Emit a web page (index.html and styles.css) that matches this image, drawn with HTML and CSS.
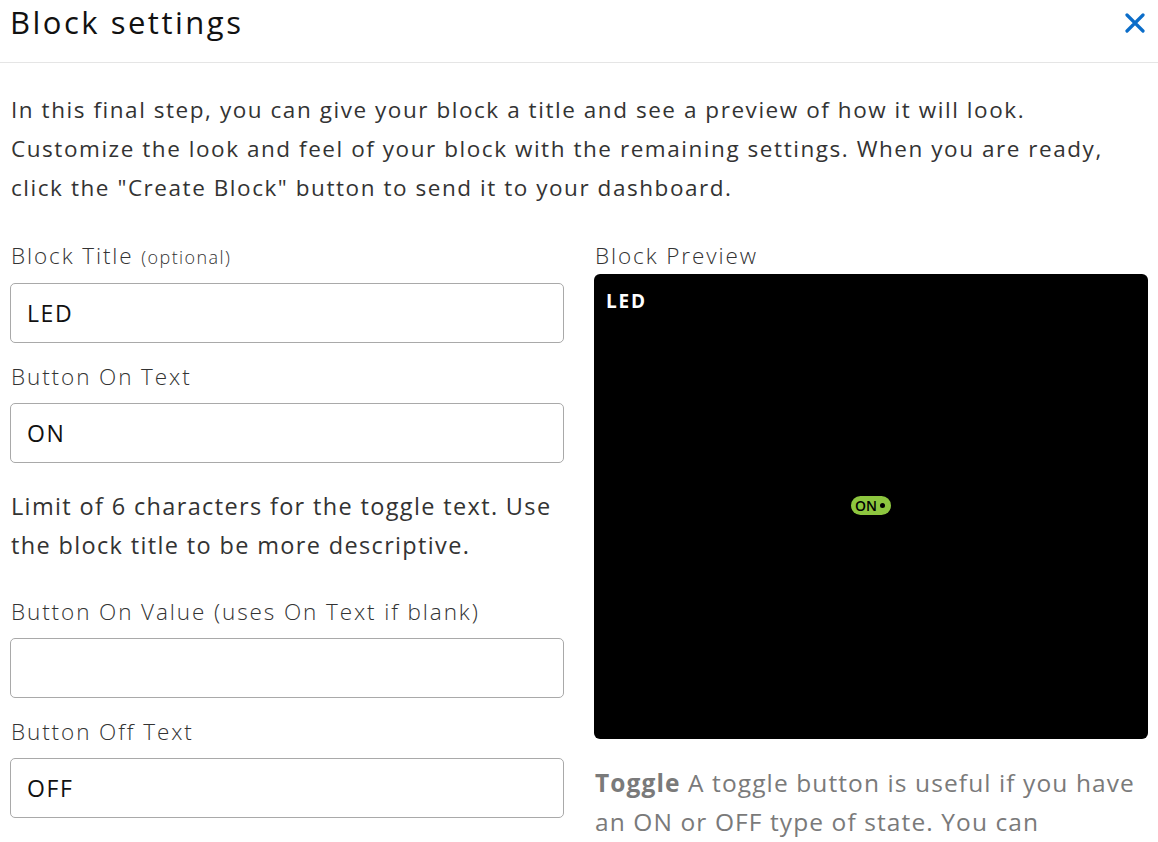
FILE: index.html
```html
<!DOCTYPE html>
<html lang="en">
<head>
<meta charset="utf-8">
<title>Block settings</title>
<link rel="stylesheet" href="styles.css">
</head>
<body>
<div class="modal">
  <header class="modal-header">
    <h1 class="modal-title">Block settings</h1>
    <button class="close" aria-label="Close">
      <svg width="20" height="20" viewBox="0 0 20 20"><path d="M2 2 L18 18 M18 2 L2 18" stroke="#0b6dc9" stroke-width="3.2" stroke-linecap="round" fill="none"/></svg>
    </button>
  </header>
  <div class="modal-body">
    <p class="intro">In this final step, you can give your block a title and see a preview of how it will look. Customize the look and feel of your block with the remaining settings. When you are ready, click the "Create Block" button to send it to your dashboard.</p>
    <div class="columns">
      <div class="col">
        <div class="field">
          <label class="label">Block Title <small>(optional)</small></label>
          <div class="input">LED</div>
        </div>
        <div class="field">
          <label class="label">Button On Text</label>
          <div class="input">ON</div>
        </div>
        <p class="help">Limit of 6 characters for the toggle text. Use the block title to be more descriptive.</p>
        <div class="field">
          <label class="label">Button On Value (uses On Text if blank)</label>
          <div class="input"></div>
        </div>
        <div class="field">
          <label class="label">Button Off Text</label>
          <div class="input">OFF</div>
        </div>
      </div>
      <div class="col">
        <div class="label preview-label">Block Preview</div>
        <div class="preview">
          <div class="preview-title">LED</div>
          <div class="preview-center">
            <span class="toggle">ON<span class="knob"></span></span>
          </div>
        </div>
        <p class="desc"><b>Toggle</b> A toggle button is useful if you have an ON or OFF type of state. You can</p>
      </div>
    </div>
  </div>
</div>
</body>
</html>
```
FILE: styles.css
```css
* { box-sizing: border-box; }
html, body { margin: 0; padding: 0; background: #fff; }
body {
  font-family: "Open Sans", Lato, sans-serif;
  color: #333;
  width: 1158px;
  height: 842px;
  overflow: hidden;
}
.modal-header {
  height: 63px;
  border-bottom: 1px solid #e5e5e5;
  display: flex;
  justify-content: space-between;
  align-items: flex-start;
  padding: 0 13px 0 10px;
}
.modal-title {
  margin: 0;
  font-size: 31px;
  line-height: 44px;
  font-weight: 500;
  letter-spacing: 2.5px;
  color: #111;
}
.close {
  border: 0;
  background: none;
  padding: 0;
  margin-top: 13px;
  width: 20px;
  height: 20px;
  cursor: pointer;
}
.close svg { display: block; }
.modal-body { padding: 0 10px; }
.intro {
  margin: 27px 0 0 1px;
  font-size: 22.5px;
  line-height: 39px;
  letter-spacing: 1.55px;
  color: #333;
}
.columns {
  display: grid;
  grid-template-columns: 554px 554px;
  column-gap: 30px;
  margin-top: 31px;
}
.label {
  display: block;
  font-size: 22.5px;
  line-height: 36px;
  font-weight: 300;
  letter-spacing: 1.9px;
  color: #333;
  padding-left: 1px;
}
.label small { font-size: 18px; letter-spacing: 1.4px; }
.field .label { margin-bottom: 8px; }
.field { margin-bottom: 16px; }
.input {
  height: 60px;
  border: 1px solid #a9a9a9;
  border-radius: 5px;
  padding: 0 16px;
  font-size: 23px;
  line-height: 58px;
  letter-spacing: 1.6px;
  color: #111;
}
.help {
  margin: 24px 0 29px 1px;
  font-size: 23.5px;
  line-height: 39px;
  letter-spacing: 1.35px;
  color: #333;
}
.preview {
  background: #000;
  height: 465px;
  border-radius: 6px;
  padding: 14px 12px;
  display: flex;
  flex-direction: column;
}
.preview-title {
  color: #fff;
  font-weight: 700;
  font-size: 19px;
  line-height: 26px;
  letter-spacing: 1.8px;
}
.preview-center {
  flex: 1;
  display: flex;
  align-items: center;
  justify-content: center;
  padding-bottom: 28px;
}
.toggle {
  display: inline-flex;
  align-items: center;
  gap: 3px;
  background: #8dc63f;
  color: #000;
  border-radius: 10px;
  height: 19px;
  padding: 0 6px 0 4px;
  font-size: 14px;
  font-weight: 600;
  line-height: 19px;
}
.knob {
  width: 5px;
  height: 5px;
  border-radius: 50%;
  background: #000;
}
.desc {
  margin: 24px 0 0 1px;
  font-size: 24.5px;
  line-height: 39px;
  letter-spacing: 1.1px;
  color: #7a7a7a;
}
.desc b { font-weight: 700; }
```
